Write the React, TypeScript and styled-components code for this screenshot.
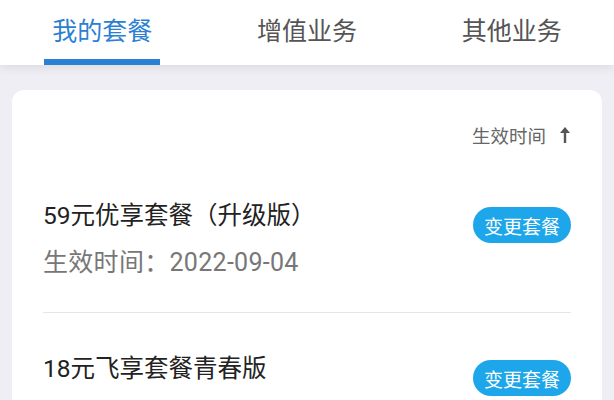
import React from "react";
import styled, { createGlobalStyle } from "styled-components";

const Global = createGlobalStyle`
  html, body { margin: 0; padding: 0; }
  body {
    background: #eeeef4;
    font-family: "Noto Sans CJK SC", "Noto Sans", sans-serif;
    width: 614px;
    height: 400px;
    overflow: hidden;
  }
`;

const Header = styled.div`
  display: grid;
  grid-template-columns: repeat(3, 1fr);
  height: 65px;
  background: #ffffff;
  box-shadow: 0 3px 9px rgba(0, 0, 0, 0.08);
  position: relative;
  z-index: 1;
`;

const Tab = styled.div<{ $active?: boolean }>`
  display: flex;
  flex-direction: column;
  align-items: center;
  justify-content: space-between;
  font-size: 25px;
  line-height: 1;
  padding-top: 17px;
  color: ${(p) => (p.$active ? "#2b80d3" : "#555555")};
  &::after {
    content: "";
    display: block;
    width: 116px;
    height: 6px;
    background: ${(p) => (p.$active ? "#2b80d3" : "transparent")};
  }
`;

const Body = styled.div`
  padding: 25px 12px 0;
`;

const Card = styled.div`
  background: #ffffff;
  border-radius: 12px;
  padding: 0 31px;
  min-height: 400px;
`;

const SortBar = styled.div`
  display: flex;
  justify-content: flex-end;
  align-items: center;
  gap: 13px;
  height: 90px;
  font-size: 18.5px;
  color: #666666;
`;

const Row = styled.div<{ $last?: boolean }>`
  display: flex;
  align-items: flex-start;
  justify-content: space-between;
  padding: ${(p) => (p.$last ? "40px 0 0" : "20px 0 33px")};
  border-bottom: ${(p) => (p.$last ? "none" : "1.5px solid #e6e6e6")};
`;

const Info = styled.div`
  display: flex;
  flex-direction: column;
  gap: 15px;
`;

const Title = styled.div`
  font-family: "Roboto", "Noto Sans CJK SC", sans-serif;
  font-size: 24.5px;
  line-height: 32px;
  color: #222222;
`;

const Sub = styled.div`
  font-family: "Roboto", "Noto Sans CJK SC", sans-serif;
  font-size: 25px;
  line-height: 32px;
  color: #777777;
  letter-spacing: 0.3px;
`;

const Button = styled.div<{ $offset: number }>`
  margin-top: ${(p) => p.$offset}px;
  width: 98px;
  height: 36px;
  border-radius: 18px;
  background: #1da6ea;
  color: #ffffff;
  font-size: 19px;
  display: flex;
  align-items: center;
  justify-content: center;
`;

const Arrow = () => (
  <svg width="12" height="18" viewBox="0 0 12 18">
    <path d="M6 1 L11 7 L7.2 7 L7.2 17 L4.8 17 L4.8 7 L1 7 Z" fill="#555" />
  </svg>
);

export default function App() {
  return (
    <>
      <Global />
      <Header>
        <Tab $active>我的套餐</Tab>
        <Tab>增值业务</Tab>
        <Tab>其他业务</Tab>
      </Header>
      <Body>
        <Card>
          <SortBar>
            <span>生效时间</span>
            <Arrow />
          </SortBar>
          <Row>
            <Info>
              <Title>59元优享套餐（升级版）</Title>
              <Sub>生效时间：2022-09-04</Sub>
            </Info>
            <Button $offset={7}>变更套餐</Button>
          </Row>
          <Row $last>
            <Info>
              <Title>18元飞享套餐青春版</Title>
            </Info>
            <Button $offset={7}>变更套餐</Button>
          </Row>
        </Card>
      </Body>
    </>
  );
}
